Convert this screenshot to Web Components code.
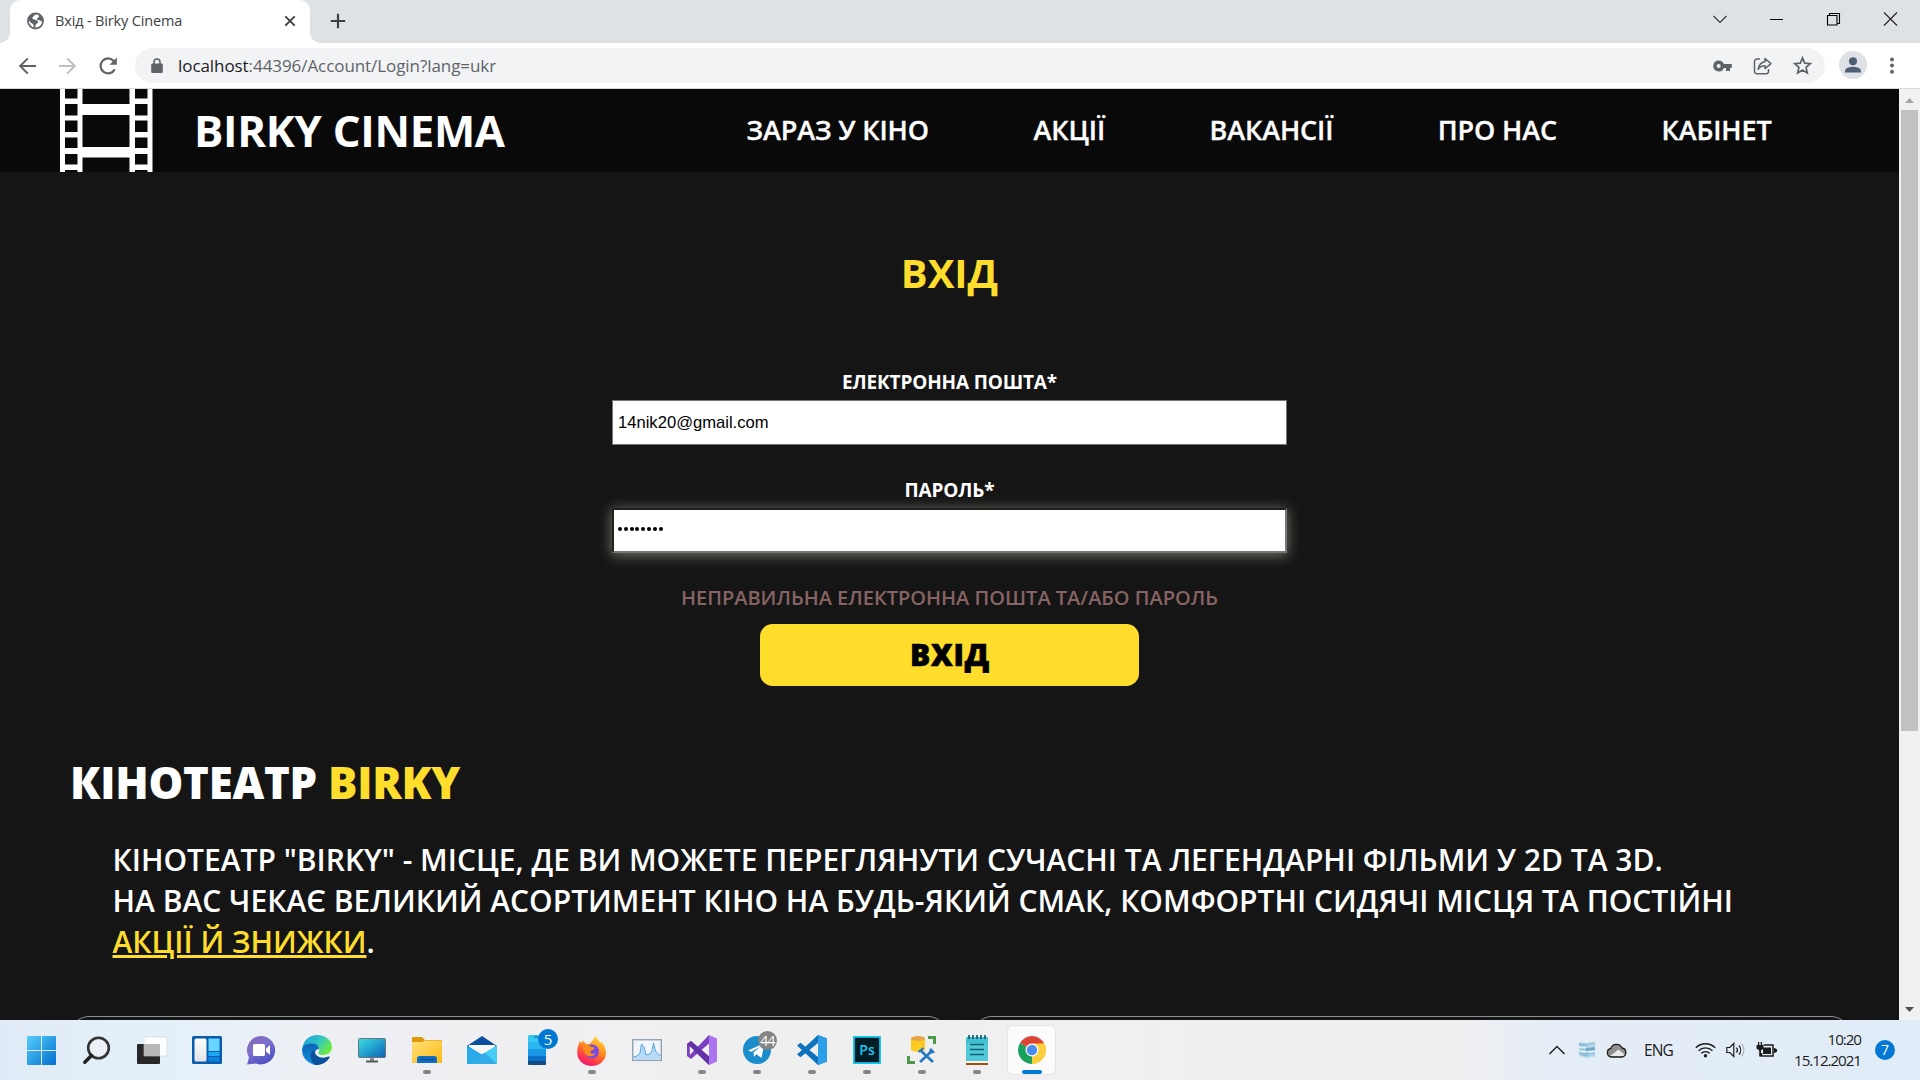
<!DOCTYPE html>
<html lang="uk">
<head>
<meta charset="utf-8">
<title>Вхід - Birky Cinema</title>
<style>
html,body{margin:0;height:100%;overflow:hidden;background:#151515}
body{font-family:"Open Sans","Noto Sans",sans-serif}
</style>
</head>
<body>
<desktop-screen></desktop-screen>
<script>
const define=(name,html)=>{
  const t=document.createElement('template');t.innerHTML=html;
  customElements.define(name,class extends HTMLElement{
    constructor(){super();this.attachShadow({mode:'open'}).append(t.content.cloneNode(true));}
  });
};

define('browser-tabs',`<style>
:host{display:flex;height:43px;background:#dee1e6;align-items:stretch;box-sizing:border-box;padding-left:10px;color:#3c4043}
.tab{width:300px;box-sizing:border-box;background:#fff;border-radius:10px 10px 0 0;display:flex;align-items:center;padding:0 14px 2px 17px;position:relative}
.tab::before,.tab::after{content:"";position:absolute;bottom:0;width:10px;height:10px}
.tab::before{left:-10px;background:radial-gradient(circle at 0 0,#dee1e6 9.5px,#fff 10px)}
.tab::after{right:-10px;background:radial-gradient(circle at 100% 0,#dee1e6 9.5px,#fff 10px)}
.t{font-size:14.5px;letter-spacing:-.15px;margin-left:11px;flex:1;line-height:20px;white-space:nowrap}
svg{display:block;flex:none}
.plus{margin:13px 0 0 19.5px}
.win{margin-left:auto;display:flex;align-items:center;gap:42px;padding:0 22px 6px 0}
</style>
<div class="tab"><svg width="17" height="18" viewBox="0 0 18 18"><circle cx="9" cy="9" r="8.9" fill="#5f6368"/><path d="M9.5 2c-2 .1-1.600 1.600-3 2.400C5 5.200 5.600 7 7 7.200c1.800.1 2.200 1.200 3.600 1.300 1.200.3 1.600 1.300.8 2.300-.8 1.200-2 .8-2.300 2.400L8.600 16c-1.600-.3-1.900-1.500-1.900-3 0-1.200-1.400-1.300-2.300-1.900L2 8.400A7 7 0 0 0 8.500 16h1A7 7 0 0 0 16 9.500c-1.300-.2-1.800-1.200-3-1.300-.8-.3-2.400.2-2.500-1.200 0-1.200 1.400-1.200 2-2.200.3-.8.1-1.500-.2-2A7 7 0 0 0 9.500 2z" fill="#fff"/></svg>
<span class="t">Вхід - Birky Cinema</span>
<svg width="12" height="12" viewBox="0 0 12 12"><path d="M1.300 1.300l9.400 9.400M10.700 1.300L1.300 10.700" stroke="#3c4043" stroke-width="1.900"/></svg></div>
<svg class="plus" width="16" height="16" viewBox="0 0 16 16"><path d="M8 .8v14.400M.8 8h14.400" stroke="#3c4043" stroke-width="2.200"/></svg>
<div class="win">
<svg width="14" height="14" viewBox="0 0 14 14"><path d="M.5 4l6.500 6.500L13.500 4" fill="none" stroke="#333" stroke-width="1.100"/></svg>
<svg width="15" height="14" viewBox="0 0 15 14"><path d="M1 7.500h13" stroke="#000"/></svg>
<svg width="15" height="14" viewBox="0 0 15 14"><path d="M1.500 3.500h9.500v9.500h-9.500zM3.500 3V1.500h10v10H11.500" fill="none" stroke="#000" stroke-width="1.100"/></svg>
<svg width="15" height="14" viewBox="0 0 15 14"><path d="M1 .5l13 13M14 .5l-13 13" stroke="#222" stroke-width="1.100"/></svg>
</div>`);

define('browser-toolbar',`<style>
:host{display:flex;height:46px;box-sizing:border-box;background:#fff;border-bottom:1px solid #d5d7da;align-items:flex-start;padding:5px 22px 0 18px}
svg{display:block;flex:none}
.nav{display:flex;gap:21px;height:35px;align-items:center;width:117px}
.box{flex:1;height:35px;border-radius:18px;background:#f1f3f4;display:flex;align-items:center;padding:0 13px 0 16px}
.url{font-size:17px;color:#5f6368;letter-spacing:-.07px;margin-left:15px;flex:1;white-space:nowrap;line-height:24px}
.url b{font-weight:400;color:#202124}
.ic{display:flex;gap:20px;align-items:center}
.av{width:28px;height:28px;border-radius:50%;background:#dee1e6;margin:3px 19px 0 14px}
.dots{margin-top:9px;padding-right:0}
</style>
<div class="nav">
<svg width="19" height="20" viewBox="0 0 19 20"><path d="M18 10H2.500M9.800 2.400L2.200 10l7.600 7.600" fill="none" stroke="#5f6368" stroke-width="2"/></svg>
<svg width="19" height="20" viewBox="0 0 19 20"><path d="M1 10h15.500M9.200 2.400l7.600 7.600-7.600 7.600" fill="none" stroke="#bdbfc2" stroke-width="2"/></svg>
<svg width="20" height="20" viewBox="0 0 20 20"><path d="M16.800 13.200A7.500 7.500 0 1 1 15.500 4.700L17.300 6.500" fill="none" stroke="#5f6368" stroke-width="2.200"/><path d="M18.800 1.500v7.300h-7.300z" fill="#5f6368"/></svg>
</div>
<div class="box">
<svg width="12" height="16" viewBox="0 0 12 16"><path d="M1.500 5.500h9a1.300 1.300 0 0 1 1.300 1.300v7a1.300 1.300 0 0 1-1.300 1.300h-9A1.300 1.300 0 0 1 .2 13.800v-7a1.300 1.300 0 0 1 1.300-1.300z" fill="#5f6368"/><path d="M3 6V4a3 3 0 0 1 6 0v2" fill="none" stroke="#5f6368" stroke-width="1.600"/></svg>
<span class="url"><b>localhost</b>:44396/Account/Login?lang=ukr</span>
<div class="ic">
<svg width="20" height="12" viewBox="0 0 20 12"><path fill-rule="evenodd" d="M5.700.5A5.500 5.500 0 0 1 10.900 4H18.800V8H17V11H13V8H10.900A5.500 5.500 0 1 1 5.700.5zM5.700 4a2 2 0 1 0 0 4 2 2 0 0 0 0-4z" fill="#5f6368"/></svg>
<svg width="20" height="18" viewBox="0 0 20 18"><g fill="none" stroke="#5f6368" stroke-width="1.500"><path d="M7 2H4a2.500 2.500 0 0 0-2.500 2.500v9.700A2.500 2.500 0 0 0 4 16.700h9a2.500 2.500 0 0 0 2.500-2.500V12"/><path d="M12 1.600l6 5-6 5V8.800c-3.200 0-5.300 1-6.800 3.500.5-4 2.700-7 6.800-7.600z" stroke-linejoin="round"/></g></svg>
<svg width="19" height="19" viewBox="0 0 19 19"><path d="M9.500 1.900l2.200 5.300 5.600.5-4.200 3.700 1.200 5.500-4.800-2.900-4.800 2.900 1.200-5.500L1.700 7.700l5.600-.5z" fill="none" stroke="#5f6368" stroke-width="1.700"/></svg>
</div></div>
<svg class="av" viewBox="0 0 28 28"><circle cx="14" cy="10.200" r="4" fill="#4f5d75"/><path d="M6 21.500v-1.700c0-2.700 5-4.100 8-4.100s8 1.400 8 4.100v1.700z" fill="#4f5d75"/></svg>
<svg class="dots" width="12" height="18" viewBox="0 0 12 18"><g fill="#5f6368"><circle cx="6" cy="2.500" r="2"/><circle cx="6" cy="8.500" r="2"/><circle cx="6" cy="14.700" r="2"/></g></svg>`);

define('site-header',`<style>
:host{display:flex;height:83px;background:#090909;align-items:center;color:#fff;padding-left:60px}
svg{display:block;flex:none}
.n{font-size:43.75px;font-weight:700;margin-left:41px;line-height:60px;white-space:nowrap;width:552.5px;letter-spacing:-.3px;padding-bottom:2px}
nav{display:flex;gap:104.6px;font-size:27px;font-weight:600;line-height:38px;white-space:nowrap;letter-spacing:-.13px;-webkit-text-stroke:.3px #fff;padding-bottom:2px}
</style>
<svg width="93" height="83" viewBox="0 0 93 83"><path fill="#fff" fill-rule="evenodd" d="M0 0H22.500V15H69.500V0H92.500V83H69.500V68.500H22.500V83H0zM22.500 26H69.500V58H22.500zM5 0H17.500V9.500H5zM5 15H17.500V26.500H5zM5 31.500H17.500V43H5zM5 48.500H17.500V59H5zM5 65H17.500V75.500H5zM5 81H17.500V83H5zM75 0H87.500V9.500H75zM75 15H87.500V26.500H75zM75 31.500H87.500V43H75zM75 48.500H87.500V59H75zM75 65H87.500V75.500H75zM75 81H87.500V83H75z"/></svg>
<span class="n">BIRKY CINEMA</span>
<nav><span>ЗАРАЗ У КІНО</span><span>АКЦІЇ</span><span>ВАКАНСІЇ</span><span>ПРО НАС</span><span>КАБІНЕТ</span></nav>`);

define('form-field',`<style>
:host{display:flex;flex-direction:column;align-items:center;width:675px;color:#fff}
label{font-size:19px;font-weight:700;line-height:27px;margin-bottom:4px;padding-top:1px;white-space:nowrap;letter-spacing:-.15px}
.i{width:675px;height:45px;box-sizing:border-box;background:#fff;border:1px solid #767676;color:#000;font:16.6px/20px "Liberation Sans",Arial,sans-serif;display:flex;align-items:center;padding-left:5px}
:host([focused]) .i{border:2px solid;border-color:#212121 #767676 #767676 #212121;padding-left:4px;box-shadow:0 2px 12px 1px rgba(225,235,205,.42)}
</style><label><slot name="label"></slot></label><div class="i"><slot></slot></div>`);

define('login-form',`<style>
:host{display:flex;flex-direction:column;align-items:center;width:1899px;padding-top:73px;font-family:"Open Sans",sans-serif}
h1{margin:0 0 68px;font-size:40px;font-weight:700;line-height:55px;color:#ffdd2d}
form-field+form-field{margin-top:31px}
.e{margin-top:31px;font-size:20px;font-weight:600;line-height:27px;color:#876464;white-space:nowrap}
button{margin:13px 0 0;width:379px;height:62px;border:0;border-radius:12.500px;background:#ffdd2d;color:#000;font:800 30px/40px "Open Sans",sans-serif;padding:0 0 0 1px;letter-spacing:.8px;-webkit-text-stroke:.7px #000}
.d{display:flex;gap:1.830px;margin-top:-4px}
.d i{width:4px;height:4px;border-radius:50%;background:#000}
</style>
<h1>ВХІД</h1>
<form-field><span slot="label">ЕЛЕКТРОННА ПОШТА*</span>14nik20@gmail.com</form-field>
<form-field focused><span slot="label">ПАРОЛЬ*</span><span class="d"><i></i><i></i><i></i><i></i><i></i><i></i><i></i><i></i></span></form-field>
<div class="e">НЕПРАВИЛЬНА ЕЛЕКТРОННА ПОШТА ТА/АБО ПАРОЛЬ</div>
<button>ВХІД</button>`);

define('about-section',`<style>
:host{display:block;width:1899px;color:#fff}
h2{margin:66px 0 0 70px;font-size:43.750px;font-weight:800;line-height:60px;white-space:nowrap;letter-spacing:-.26px}
h2 span{color:#ffdd2d}
p{margin:27px 0 0 112.500px;font-size:30px;font-weight:600;line-height:41px;white-space:nowrap}
a{color:#ffdd2d;text-decoration:underline;cursor:pointer}
.cards{display:flex;gap:26px;margin:54px 0 0 70px}
.cards div{box-sizing:border-box;width:877px;height:300px;border:1px solid #8f8f8f;border-radius:19px}
</style>
<h2>КІНОТЕАТР <span>BIRKY</span></h2>
<p>КІНОТЕАТР "BIRKY" - МІСЦЕ, ДЕ ВИ МОЖЕТЕ ПЕРЕГЛЯНУТИ СУЧАСНІ ТА ЛЕГЕНДАРНІ ФІЛЬМИ У 2D ТА 3D.<br>НА ВАС ЧЕКАЄ ВЕЛИКИЙ АСОРТИМЕНТ КІНО НА БУДЬ-ЯКИЙ СМАК, КОМФОРТНІ СИДЯЧІ МІСЦЯ ТА ПОСТІЙНІ<br><a>АКЦІЇ Й ЗНИЖКИ</a>.</p>
<div class="cards"><div></div><div></div></div>`);

define('scroll-bar',`<style>
:host{display:flex;flex-direction:column;width:21px;height:931px;background:#f1f1f1;align-items:center}
.th{width:17px;height:621px;background:#c1c1c1;margin-bottom:auto}
svg{display:block}
</style>
<svg width="21" height="21" viewBox="0 0 21 21"><path d="M6 14l4.500-5 4.500 5z" fill="#a3a3a3"/></svg><div class="th"></div>
<svg width="21" height="21" viewBox="0 0 21 21"><path d="M6 8l4.500 5L15 8z" fill="#505050"/></svg>`);

define('task-item',`<style>
:host{display:flex;flex-direction:column;align-items:center;width:55px;height:60px;position:relative;flex:none}
.b{width:47px;height:48px;margin-top:6px;border-radius:5px;display:flex;align-items:center;justify-content:center;box-sizing:border-box;padding-bottom:0}
:host([active]) .b{background:#fbfbfc;box-shadow:0 0 0 1px #e4e4e6}
.r{position:absolute;left:50%;bottom:6px;width:8px;height:4px;border-radius:2px;background:#868686;transform:translateX(-50%);display:none}
:host([run]) .r{display:block}
:host([active]) .r{display:block;width:20px;background:#0078d4}
::slotted(svg){display:block;overflow:visible}
</style><div class="b"><slot></slot></div><div class="r"></div><slot name="badge"></slot>`);

define('task-bar',`<style>
:host{display:flex;height:60px;background:linear-gradient(90deg,#e1ebf7 0,#e3f0f9 150px,#eeeff3 330px,#f0eff0 700px,#efeff1 1460px,#e5edf6 1550px,#e0ecf8 100%);padding-left:14px;color:#1c1c1c;width:1906px;align-items:stretch}
.bd{position:absolute;left:29px;top:9px;width:20px;height:20px;border-radius:50%;background:#0078d4;color:#fff;font-size:15px;line-height:20px;text-align:center}
.g{background:#858585;font-size:14px;letter-spacing:-.7px;left:29px;top:11px;width:19px;height:19px;line-height:19px}
.tray{margin-left:auto;display:flex;align-items:center;padding-right:25px}
.tray svg{display:block;flex:none}
.eng{font-size:15.5px;letter-spacing:-.9px;width:28px;margin:0 23px 0 17px}
.clk{font-size:15.2px;line-height:20.500px;text-align:right;width:75px;letter-spacing:-1.05px;margin:0 13px 0 9px;padding:0 1px 1px 0;box-sizing:border-box;white-space:nowrap}
.no{width:20px;height:20px;border-radius:50%;background:#0078d4;color:#fff;font-size:14px;line-height:20px;text-align:center}
</style>
<task-item><svg width="29" height="29" viewBox="0 0 29 29"><defs><linearGradient id="w" x1="0" y1="0" x2="1" y2="1"><stop offset="0" stop-color="#55cdfd"/><stop offset="1" stop-color="#0470ce"/></linearGradient></defs><path fill="url(#w)" d="M1 0H14V14H0V1A1 1 0 0 1 1 0zM15 0H28A1 1 0 0 1 29 1V14H15zM0 15H14V29H1A1 1 0 0 1 0 28zM15 15H29V28A1 1 0 0 1 28 29H15z"/></svg></task-item>
<task-item><svg width="27" height="29" viewBox="0 0 27 29"><circle cx="15.500" cy="12" r="10.300" fill="#ebf1f7" stroke="#333" stroke-width="2.600"/><path d="M8.500 19.500L1.800 26.200" stroke="#222" stroke-width="3.500" stroke-linecap="round"/></svg></task-item>
<task-item><svg width="30" height="29" viewBox="0 0 30 29"><rect y="8" width="23" height="20" rx="1" fill="#282828"/><rect x="7" y="1" width="23" height="19" rx="1" fill="#fff" fill-opacity=".92" stroke="#d5d5d5" stroke-width=".6"/><path d="M7 8H23V20H7z" fill="#b7b7b7"/></svg></task-item>
<task-item><svg width="30" height="28" viewBox="0 0 30 28"><defs><linearGradient id="wi" x1="0" y1="0" x2="0" y2="1"><stop offset="0" stop-color="#fff"/><stop offset="1" stop-color="#e1e3e6"/></linearGradient></defs><rect width="30" height="28" rx="1.500" fill="#0a5cad"/><rect x="2.500" y="2.500" width="12" height="23" rx="1.500" fill="url(#wi)"/><path d="M16.500 2.500h11v12.500h-11z" fill="#66d5ff"/><path d="M16.500 16h11v4h-11z" fill="#1fa6f5"/><path d="M16.500 21h11v4.500h-11z" fill="#0a84e0"/></svg></task-item>
<task-item><svg width="29" height="29" viewBox="0 0 29 29"><defs><linearGradient id="ch" x1="0" y1="0" x2=".6" y2="1"><stop offset="0" stop-color="#8d68b0"/><stop offset=".5" stop-color="#7b70cf"/><stop offset="1" stop-color="#4f50c4"/></linearGradient></defs><path d="M14.500 0A14.200 14.200 0 1 1 9 27.500L0 28.500 2 21.500A14.300 14.300 0 0 1 14.500 0z" fill="url(#ch)"/><rect x="6" y="8" width="12" height="12" rx="1.500" fill="#fff"/><path d="M19 12.500l4-3.200v9.400l-4-3.200z" fill="#fff"/></svg></task-item>
<task-item><svg width="30" height="30" viewBox="0 0 30 30"><defs><linearGradient id="e1" x1="0" y1="0" x2="1" y2=".5"><stop offset="0" stop-color="#179ed8"/><stop offset=".55" stop-color="#2fc3c8"/><stop offset="1" stop-color="#6bea45"/></linearGradient><linearGradient id="e2" x1="0" y1="0" x2="0" y2="1"><stop offset="0" stop-color="#0c64b5"/><stop offset="1" stop-color="#118ee0"/></linearGradient></defs><path d="M.5 13C1.500 5 8 0 15 0c9 0 15 6 15 12 0 5-4 8-9 8-4 0-5.500-1.500-4-3.500C18.500 14 16 10 11 10 6 10 2 12 .5 13z" fill="url(#e1)"/><path d="M0 15C0 10.500 5 8.500 10 8.500c4.500 0 7 2.800 7 5.500-3 0-5 3-3.500 7 1.500 4 6 6 9.500 5.500-3 3-7.500 4-12 3A15 15 0 0 1 0 15z" fill="url(#e2)"/><path d="M12.500 14.500c-6 4-4.500 12 1 15.500 6 0 11.500-2.500 14-7.500.5-1-.2-1.300-1-.9-6 2.800-14.500.4-14-7.100z" fill="#0a509a"/></svg></task-item>
<task-item><svg width="28" height="25" viewBox="0 0 28 25"><defs><linearGradient id="mo" x1="0" y1="0" x2="1" y2="1"><stop offset="0" stop-color="#3be0e8"/><stop offset="1" stop-color="#0a62b4"/></linearGradient></defs><rect x=".5" y=".5" width="27" height="19" rx="1" fill="url(#mo)" stroke="#6e7376"/><path d="M12 20h4v3h-4z" fill="#8a9094"/><path d="M8 22.500h12v2H8z" fill="#555a5e"/></svg></task-item>
<task-item run><svg width="30" height="26" viewBox="0 0 30 26"><defs><linearGradient id="fo" x1="0" y1="0" x2="1" y2="1"><stop offset="0" stop-color="#ffe07a"/><stop offset="1" stop-color="#fdba12"/></linearGradient></defs><path d="M0 1a1 1 0 0 1 1-1h9l3 3h17v6H0z" fill="#dc9a0b"/><path d="M0 5h10l3-1.500h17V26H0z" fill="url(#fo)"/><path d="M5 26v-4.500A2.500 2.500 0 0 1 7.500 19h15a2.500 2.500 0 0 1 2.500 2.500V26z" fill="#0f70c3"/><path d="M8 22.500h14" stroke="#0a4c8c" stroke-width="1.300"/></svg></task-item>
<task-item><svg width="30" height="28" viewBox="0 0 30 28"><path d="M0 10L15 0l15 10v8H0z" fill="#0a4f9d"/><path d="M2 9h26v10H2z" fill="#f8f8f9"/><path d="M0 9.500l15 9 15-9V28H0z" fill="#29a8ea"/><path d="M30 9.500L0 28h30z" fill="#45cdf7"/><path d="M0 28L18 16.700 30 28z" fill="#1a86d4" fill-opacity=".45"/></svg></task-item>
<task-item><svg width="18" height="30" viewBox="0 0 18 30"><rect width="18" height="30" rx="1.500" fill="#36c7f4"/><path d="M0 7h18v7H0z" fill="#2cb8ee"/><path d="M0 14h18v7H0z" fill="#1996e4"/><path d="M0 21h18v5H0z" fill="#0a6fc6"/><path d="M0 26h18v3a1 1 0 0 1-1 1H1a1 1 0 0 1-1-1z" fill="#144a80"/><path d="M6 2h6" stroke="#0a5d9a" stroke-width="1"/></svg><span slot="badge" class="bd">5</span></task-item>
<task-item run><svg width="29" height="29" viewBox="0 0 29 29"><defs><linearGradient id="ff" x1=".8" y1="0" x2=".3" y2="1"><stop offset="0" stop-color="#ffe33c"/><stop offset=".45" stop-color="#ff8a1c"/><stop offset=".8" stop-color="#ff3350"/><stop offset="1" stop-color="#e81a78"/></linearGradient></defs><path d="M3 5l1.800 2.500L6 4.500 9 8c2 0 3-.4 4-.6C15 5 17 3 18.500 0c1.300 3 3.500 4.500 5 7l1.500-1c3 4.500 4 8 4 11A14.300 13 0 0 1 .3 17C0 12 1.500 8 3 5z" fill="url(#ff)"/><circle cx="15" cy="15.500" r="7" fill="#7a4be0"/><path d="M6 10c3-1.500 6-1 8.500 1 1.800 0 3 .6 3 1.800-1 1.200-3 1.200-4 2.700-.6 1.800 1.500 3 5 2-2 3.500-7.500 3.800-10 .5C6.500 15.500 6 13 6 10z" fill="#ff8c1d"/></svg></task-item>
<task-item><svg width="30" height="22" viewBox="0 0 30 22"><rect x=".7" y=".7" width="28.600" height="20.600" fill="#f1f6fb" stroke="#93a3b1" stroke-width="1.400"/><path d="M1.500 18L5 17l3-3 1.500-9L12 8l2 8 4-1 2-3 1.500-8L23.500 12l3 3.500 2 1v4h-27z" fill="#b7dcf7"/><path d="M1.500 18L5 17l3-3 1.500-9L12 8l2 8 4-1 2-3 1.500-8L23.500 12l3 3.500 2 1" fill="none" stroke="#5aa2dc"/></svg></task-item>
<task-item run><svg width="30" height="30" viewBox="0 0 30 30"><path d="M22 0l8 3.500v23L22 30z" fill="#a974ee"/><path d="M22 0v8.500L4 24 0 21V9l4-3 18 15.500V30L2.800 10v10L22 0z" fill="#7b3fc0"/><path d="M0 9l4-3 18 15.500V30z" fill="#6431a8"/><path d="M3 11.500v7L6.500 15z" fill="#f0f0f3"/></svg></task-item>
<task-item run><svg width="28" height="28" viewBox="0 0 28 28"><circle cx="14" cy="14" r="14" fill="#1b8dca"/><path d="M5 14.500L21.500 7l-3 15-5-3.700-2.500 2.500-.5-4.300 7-6-9 5.300z" fill="#fff"/></svg><span slot="badge" class="bd g">44</span></task-item>
<task-item run><svg width="30" height="30" viewBox="0 0 30 30"><path d="M21 8L3.500 22.300 0 19.500 21 0l9 3.500v23L21 30 0 10.500 3.500 7.700 21 22z" fill="#0f72bd"/><path d="M21 0l9 3.500v23L21 30z" fill="#2b9fe8"/></svg></task-item>
<task-item run><svg width="28" height="28" viewBox="0 0 28 28"><rect x="1" y="1" width="26" height="26" fill="#001d26" stroke="#05c0ee" stroke-width="1.800"/><text x="14" y="19" text-anchor="middle" font-family="Open Sans,sans-serif" font-weight="600" font-size="14" fill="#1bc8f5">Ps</text></svg></task-item>
<task-item run><svg width="29" height="28" viewBox="0 0 29 28"><path d="M4 2.500v11c0 3 14 3 14 0v-11z" fill="#fbcb1f"/><ellipse cx="11" cy="2.500" rx="7" ry="2.500" fill="#e7a64a"/><path d="M21 1.500h6.500V8M1.500 20v6.500H8" fill="none" stroke="#4b9a4b" stroke-width="3"/><path d="M13 14l13 12M26 14L13 26" stroke="#2478c4" stroke-width="2.600"/><path d="M11.500 16l5-4M24 12.500l-1 4 4.500-.5" fill="none" stroke="#2478c4" stroke-width="2.200"/></svg></task-item>
<task-item run><svg width="22" height="30" viewBox="0 0 22 30"><rect y="2" width="22" height="27" rx="1" fill="#3fc0d2"/><path d="M0 8h22v18H0z" fill="#51c8d8"/><path d="M3 0v4M7 0v4M11 0v4M15 0v4M19 0v4" stroke="#175d70" stroke-width="1.700"/><path d="M4 9.500h14M4 14.500h14M4 19.500h14" stroke="#155f73" stroke-width="1.700"/><path d="M0 26h22v2H0z" fill="#f5efe8"/><path d="M0 28h22v2H0z" fill="#a2500f"/></svg></task-item>
<task-item active><svg width="28" height="28" viewBox="0 0 28 28"><path d="M14 14L1.900 7A14 14 0 0 1 26.100 7z" fill="#db4437"/><path d="M14 14L26.100 7A14 14 0 0 1 14 28z" fill="#fbcf3e"/><path d="M14 14v14A14 14 0 0 1 1.900 7z" fill="#1ba15c"/><path d="M14 7.500H26.400A14 14 0 0 1 14 28l5.700-10.700z" fill="#fbcf3e"/><circle cx="14" cy="14" r="6.500" fill="#fff"/><circle cx="14" cy="14" r="5.200" fill="#4b8bf4"/></svg></task-item>
<div class="tray">
<svg width="18" height="12" viewBox="0 0 18 12" style="margin-right:12px"><path d="M1.500 10l7.500-7.500L16.500 10" fill="none" stroke="#1c1c1c" stroke-width="1.400"/></svg>
<svg width="18" height="18" viewBox="0 0 18 18" style="margin-right:10px"><path d="M1 1l8 1 8-1v15l-9 1-7-2z" fill="#bcdcee"/><path d="M1 2l8 1v3L1 5zM1 11l9 1v4l-8-2z" fill="#8dbdd8"/><path d="M8 7l9-1v3l-9 1z" fill="#6fa8c8"/><path d="M9 2l8-1v3l-8 1zM2 7l6 1v2l-6-1zM10 12l7-1v3l-7 1z" fill="#a3cbe0"/><path d="M1 6h7M10 10.500h7M2 10.700h6" stroke="#eef7fc" stroke-width="1.200"/></svg>
<svg width="21" height="15" viewBox="0 0 21 15"><path d="M5.500 14A4.300 4.300 0 0 1 4.800 5.500 6 6 0 0 1 16 5a4.600 4.600 0 0 1 .3 9z" fill="#919191"/><path d="M4 13.200L12.500 6.500l6.500 5.500-2.500 1.600z" fill="#e8e8e8"/><path d="M5.500 14A4.300 4.300 0 0 1 4.800 5.500 6 6 0 0 1 16 5a4.600 4.600 0 0 1 .3 9z" fill="none" stroke="#1c1c1c" stroke-width="1.300"/></svg>
<span class="eng">ENG</span>
<svg width="21" height="16" viewBox="0 0 21 16" style="margin-right:10px"><g fill="none" stroke="#1c1c1c" stroke-width="1.300"><path d="M.8 5.800a13.700 13.700 0 0 1 19.400 0M3.500 8.700a9.900 9.900 0 0 1 14 0M6.300 11.300a6 6 0 0 1 8.400 0"/></g><circle cx="10.500" cy="13.700" r="1.700" fill="#1c1c1c"/></svg>
<svg width="20" height="16" viewBox="0 0 20 16" style="margin-right:10px"><g fill="none" stroke="#1c1c1c" stroke-width="1.200"><path d="M.8 5.500h3l4-4v13l-4-4h-3zM10.500 5.500a4 4 0 0 1 0 5M13 3.500a7 7 0 0 1 0 9"/><path d="M15.500 1.500a10 10 0 0 1 0 13" stroke="#b0b6bc"/></g></svg>
<svg width="21" height="16" viewBox="0 0 21 16" style="margin-right:1px"><path d="M7.500 3H17v11H5.500v-3" fill="none" stroke="#1c1c1c" stroke-width="1.500"/><path d="M7 5.500h8v6.500H7zM18 6h1.500v1H21v3h-1.500v1H18zM2 0h1.300v3H2zM4.700 0H6v3H4.700zM.5 3h7v3.500L5 8.500v6H3.200v-6L.5 6.500z" fill="#1c1c1c"/></svg>
<div class="clk">10:20<br>15.12.2021</div><div class="no">7</div>
</div>`);

define('desktop-screen',`<style>
:host{display:flex;flex-direction:column;width:1920px;height:1080px;overflow:hidden}
.page{display:flex;height:931px;overflow:hidden;background:#151515}
main{width:1899px;height:931px;overflow:hidden}
</style>
<browser-tabs></browser-tabs><browser-toolbar></browser-toolbar>
<div class="page"><main><site-header></site-header><login-form></login-form><about-section></about-section></main><scroll-bar></scroll-bar></div>
<task-bar></task-bar>`);
</script>
</body>
</html>
